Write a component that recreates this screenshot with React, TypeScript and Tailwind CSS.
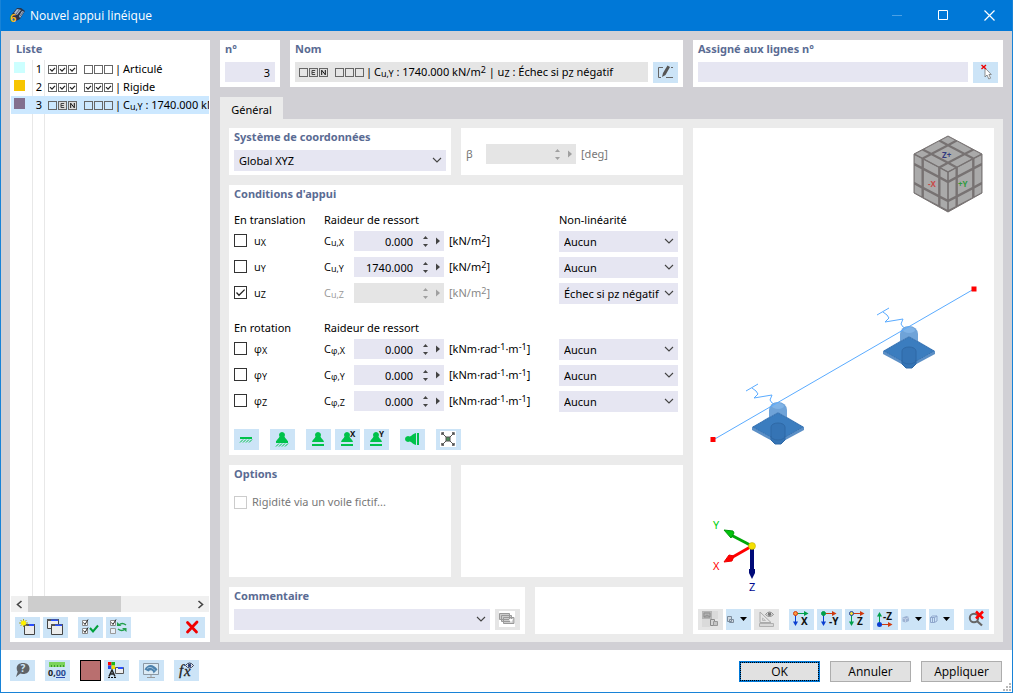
import { useState } from 'react'
import type { ReactNode } from 'react'
import clsx from 'clsx'

type Mark = '' | 'v' | 'E' | 'N'

const supports: { id: number; color: string; marks: Mark[]; name: ReactNode }[] = [
  { id: 1, color: 'bg-[#ccffff]', marks: ['v', 'v', 'v', '', '', ''], name: 'Articulé' },
  { id: 2, color: 'bg-[#f7c500]', marks: ['v', 'v', 'v', 'v', 'v', 'v'], name: 'Rigide' },
  { id: 3, color: 'bg-[#83708f]', marks: ['', 'E', 'N', '', '', ''], name: <>C<Sub>u,Y</Sub> : 1740.000 kN</> },
]

function Sub({ children }: { children: ReactNode }) {
  return <sub className="text-[9px] bottom-[-1px]">{children}</sub>
}

function Sup({ children }: { children: ReactNode }) {
  return <sup className="text-[9px] top-[-3px]">{children}</sup>
}

function Panel({ title, className, children }: { title?: string; className?: string; children?: ReactNode }) {
  return (
    <section className={clsx('bg-white', className)}>
      {title && <h2 className="px-[5px] h-5 leading-[17px] font-bold text-[#5a6b93]">{title}</h2>}
      {children}
    </section>
  )
}

function Marks({ marks }: { marks: Mark[] }) {
  return (
    <span className="flex gap-[7px] shrink-0">
      {[marks.slice(0, 3), marks.slice(3)].map((group, g) => (
        <span key={g} className="flex gap-px">
          {group.map((m, i) => (
            <svg key={i} width="9" height="9" viewBox="0 0 9 9" fill="none" stroke="#666">
              <rect x=".5" y=".5" width="8" height="8" fill={m === 'E' || m === 'N' ? '#ddd' : 'none'} />
              {m === 'v' && <path d="M2 4.2l2 2 3-3.4" stroke="#222" strokeWidth="1.2" />}
              {m === 'E' && <path d="M6.2 2.5H3v4h3.2M3 4.5h2.8" stroke="#444" />}
              {m === 'N' && <path d="M2.7 7V2.2l3.6 4.6V2" stroke="#111" />}
            </svg>
          ))}
        </span>
      ))}
    </span>
  )
}

function IconButton({ label, off, children }: { label: string; off?: boolean; children: ReactNode }) {
  return (
    <button type="button" aria-label={label} disabled={off} className={clsx('w-[25px] h-[21px] shrink-0', off ? 'bg-[#e5e5e5]' : 'bg-[#cce4f7] hover:bg-[#b8daf4]')}>
      <svg width="25" height="21" viewBox="0 0 25 21" fill="none">{children}</svg>
    </button>
  )
}

function Select({ label, options, className }: { label: string; options: string[]; className?: string }) {
  return (
    <div className={clsx('relative h-[21px] bg-[#e6e6f2]', className)}>
      <select aria-label={label} className="w-full h-full pl-[5px] pr-4 appearance-none outline-none">
        {options.map((o) => <option key={o}>{o}</option>)}
      </select>
      <svg className="absolute right-1 top-[7px] pointer-events-none" width="10" height="7" viewBox="0 0 10 7" fill="none" stroke="#444" strokeWidth="1.1">
        <path d="M1 1l4 4 4-4" />
      </svg>
    </div>
  )
}

function Stepper({ label, value, off }: { label: string; value?: string; off?: boolean }) {
  return (
    <div className={clsx('flex items-center w-[90px] h-5', off ? 'bg-[#e5e5e5] text-[#a0a0a0]' : 'bg-[#e6e6f2] text-[#444]')}>
      <input type="text" aria-label={label} defaultValue={value} disabled={off} className="flex-1 min-w-0 h-full pt-px text-right text-black outline-none" />
      <span className="flex flex-col gap-[5px] pl-[10px] pr-2">
        <button type="button" aria-label={`${label} +`} disabled={off} className="h-[3px]">
          <svg className="block" width="5" height="3" viewBox="0 0 5 3" fill="currentColor"><path d="M2.500 0L5 3H0z" /></svg>
        </button>
        <button type="button" aria-label={`${label} -`} disabled={off} className="h-[3px]">
          <svg className="block" width="5" height="3" viewBox="0 0 5 3" fill="currentColor"><path d="M2.500 3L5 0H0z" /></svg>
        </button>
      </span>
      <button type="button" aria-label={`${label} menu`} disabled={off} className="pr-1">
        <svg className="block" width="4" height="8" viewBox="0 0 4 8" fill="currentColor"><path d="M0 .5L4 4 0 7.500z" /></svg>
      </button>
    </div>
  )
}

function Check({ id, checked, off, onChange }: { id: string; checked?: boolean; off?: boolean; onChange?: () => void }) {
  return (
    <span className="relative size-[13px] shrink-0">
      <input id={id} type="checkbox" checked={!!checked} disabled={off} onChange={() => onChange?.()} className="block size-[13px] appearance-none border border-[#333] bg-white disabled:border-[#ccc]" />
      {checked && (
        <svg className="absolute inset-0 pointer-events-none" width="13" height="13" viewBox="0 0 13 13" fill="none" stroke="#222" strokeWidth="1.3">
          <path d="M2.500 6.500L5 9.200l5.600-5.600" />
        </svg>
      )}
    </span>
  )
}

const perM2 = <>[kN/m<Sup>2</Sup>]</>
const perRad = <>[kNm·rad<Sup>-1</Sup>·m<Sup>-1</Sup>]</>

const blocks = [
  {
    title: 'En translation', third: 'Non-linéarité', sym: 'u', unit: perM2,
    rows: [
      { axis: 'X', value: '0.000', options: ['Aucun', 'Échec si px négatif'] },
      { axis: 'Y', value: '1740.000', options: ['Aucun', 'Échec si py négatif'] },
      { axis: 'Z', value: '', options: ['Échec si pz négatif', 'Aucun'] },
    ],
  },
  {
    title: 'En rotation', third: '', sym: 'φ', unit: perRad,
    rows: [
      { axis: 'X', value: '0.000', options: ['Aucun'] },
      { axis: 'Y', value: '0.000', options: ['Aucun'] },
      { axis: 'Z', value: '0.000', options: ['Aucun'] },
    ],
  },
]

function Conditions() {
  const [fixed, setFixed] = useState<Record<string, boolean>>({ uZ: true })

  return (
    <div className="flex flex-col gap-[14px] px-[5px] pt-[5px]">
      {blocks.map((b) => (
        <div key={b.title}>
          <div className="grid grid-cols-[90px_1fr_119px] h-[21px] leading-[19px]">
            <span>{b.title}</span>
            <span>Raideur de ressort</span>
            <span>{b.third}</span>
          </div>
          <div className="flex flex-col gap-[5px]">
            {b.rows.map((r) => {
              const key = b.sym + r.axis
              const on = fixed[key]
              return (
                <div key={key} className="grid grid-cols-[90px_30px_90px_1fr_119px] items-start h-[21px] leading-5">
                  <span className="flex items-center gap-[7px] h-[19px]">
                    <Check id={key} checked={on} onChange={() => setFixed({ ...fixed, [key]: !on })} />
                    <label htmlFor={key} className="font-['Open_Sans',sans-serif]">{b.sym}<Sub>{r.axis}</Sub></label>
                  </span>
                  <span className={clsx("font-['Open_Sans',sans-serif]", on && 'text-[#999]')}>C<Sub>{b.sym},{r.axis}</Sub></span>
                  <Stepper label={`C ${key}`} value={r.value} off={on} />
                  <span className={clsx('pl-[5px]', on && 'text-[#888]')}>{b.unit}</span>
                  <Select label={`Non-linéarité ${key}`} options={r.options} />
                </div>
              )
            })}
          </div>
        </div>
      ))}
    </div>
  )
}

const Cone = () => <path d="M12 3a3 3 0 0 1 2.500 4.600c.3 2 3 2.800 3.500 5.400H6c.5-2.600 3.200-3.400 3.500-5.400A3 3 0 0 1 12 3z" fill="#00c24a" />

function Presets() {
  return (
    <div className="flex px-[5px] pb-[5px] mt-auto">
      <div className="flex gap-[11px] pr-[11px]">
        <IconButton label="Encastrement">
          <path d="M6 8h12v2H6z" fill="#00c24a" />
          <path d="M6 13.500l3-3m0 3l3-3m0 3l3-3m0 3l3-3" stroke="#00c24a" />
        </IconButton>
        <IconButton label="Articulation">
          <Cone />
          <path d="M6 12h12v2H6z" fill="#00c24a" />
          <path d="M6 17.500l3-3m0 3l3-3m0 3l3-3m0 3l3-3" stroke="#00c24a" />
        </IconButton>
      </div>
      <div className="flex gap-1 pr-[11px]">
        {['', 'X', 'Y'].map((a) => (
          <IconButton key={a} label={`Glissement ${a}`}>
            <Cone />
            <path d="M6 15h12v2H6z" fill="#00c24a" />
            <text x="15" y="8" fontSize="8" fontWeight="bold" fill="#111">{a}</text>
          </IconButton>
        ))}
      </div>
      <div className="flex gap-[11px]">
        <IconButton label="Appui latéral">
          <path d="M5 10a3 3 0 0 1 4.600-2.500C11.600 7.200 13 4.500 16 4v12c-3-.5-4.400-3.200-6.400-3.500A3 3 0 0 1 5 10z" fill="#00c24a" />
          <path d="M17 4h2v12h-2z" fill="#00c24a" />
        </IconButton>
        <IconButton label="Libre">
          <rect x="4" y="2" width="16" height="16" fill="#fff" />
          <path d="M6.500 4.500l11 11m0-11l-11 11" stroke="#555" />
          <path d="M6 6V4h2m8 0h2v2m0 8v2h-2m-8 0H6v-2" stroke="#444" strokeWidth="1.400" />
          <rect x="10" y="8" width="4" height="4" fill="#4c8a58" stroke="#555" />
        </IconButton>
      </div>
    </div>
  )
}

/* ---------- 3D view ---------- */

// isometric cube: corner at the front, faces cut into 3x3 tiles
const faces = [
  { o: [255, 8], u: [34, 18], v: [-34, 18] },
  { o: [221, 26], u: [34, 18], v: [0, 39] },
  { o: [255, 44], u: [34, -18], v: [0, 39] },
]
const cuts = [[0.02, 0.22], [0.29, 0.71], [0.78, 0.98]]

function Cube() {
  return (
    <g>
      <path d="M255 8l34 18v39l-34 19-34-19V26z" fill="#777272" stroke="#777272" />
      {faces.map(({ o, u, v }, f) =>
        cuts.map(([a0, a1], i) =>
          cuts.map(([b0, b1], j) => (
            <polygon
              key={`${f}${i}${j}`}
              fill="#aaa"
              points={[[a0, b0], [a1, b0], [a1, b1], [a0, b1]].map(([a, b]) => `${o[0] + u[0] * a + v[0] * b},${o[1] + u[1] * a + v[1] * b}`).join(' ')}
            />
          ))
        )
      )}
      <path d="M221 26l34 18 34-18M255 44v40" stroke="#777272" fill="none" />
      <text x="235" y="59" fontSize="8" fontWeight="bold" fill="#c94a4a">-X</text>
      <text x="265" y="59" fontSize="8" fontWeight="bold" fill="#2f9a3c">+Y</text>
      <text x="249" y="30" fontSize="8" fontWeight="bold" fill="#333a80">Z+</text>
    </g>
  )
}

function Support({ x, y }: { x: number; y: number }) {
  return (
    <g transform={`translate(${x} ${y})`}>
      <path d="M-32-12l12-7m-6 4l4 3 2 3-4 4 18-3-2 5 2 3 5 2" stroke="#5aabff" fill="none" />
      <path d="M-9 7a9 8 0 0 1 18 0v12h-18z" fill="#6fa3d8" />
      <path d="M-26 27v-3L-9 14l9-5 9 5 17 10v3L0 41z" fill="#5b8fc6" />
      <path d="M-25 24L-9 15l9-5 9 5 16 9L0 38z" fill="#3b7dbf" stroke="#346ead" strokeDasharray="1 1" />
      <path d="M-7 24a7 4 0 0 1 14 0v13l-4 4h-6l-4-4z" fill="#3574b5" stroke="#2f69a6" />
      <path d="M-7 33a7 4 0 0 0 14 0" stroke="#2f69a6" fill="none" />
      <ellipse cx="0" cy="3" rx="6" ry="3" fill="#80b3e6" />
    </g>
  )
}

function Scene() {
  return (
    <svg className="block w-full flex-1 min-h-0" viewBox="0 0 301 481" fill="none">
      <Cube />
      <Support x={216} y={199} />
      <Support x={85} y={275} />
      <path d="M20 312L281 161" stroke="#5aabff" />
      <path d="M17.500 309h5v5h-5zM278.500 158.500h5v5h-5z" fill="#f00" />
      <path d="M59 418L38 407" stroke="#00a808" strokeWidth="3" />
      <path d="M31 402l9 1 1 2-3 5z" fill="#00c40a" stroke="#00970a" />
      <path d="M59 418L38 430" stroke="#f00" strokeWidth="3" />
      <path d="M31 434l5-7 5 1-2 5z" fill="#f00" stroke="#e00" />
      <path d="M59 418v24" stroke="#000a78" strokeWidth="4" />
      <path d="M56 441h6v4l-3 6-3-6z" fill="#000a78" />
      <circle cx="59" cy="418" r="3.500" fill="#f5e000" stroke="#b9a800" strokeWidth=".5" />
      <text x="20" y="401" fontSize="11" fill="#00d010">Y</text>
      <text x="20" y="442" fontSize="11" fill="#f00">X</text>
      <text x="56" y="463" fontSize="11" fill="#000a90">Z</text>
    </svg>
  )
}

const axisViews = [
  { name: 'X', dot: '#ff9a3c', ring: '#d03a10', h: '#00a04a', v: '#0a3fd0' },
  { name: '-Y', dot: '#00a04a', ring: '#00a04a', h: '#d03a10', v: '#0a3fd0' },
  { name: 'Z', dot: '#f5e23c', ring: '#1a3a9c', h: '#d03a10', v: '#00a04a' },
]

function ViewToolbar() {
  return (
    <div className="flex flex-wrap gap-[10px] px-[5px] pb-1">
      <div className="flex gap-[3px]">
        <IconButton label="Image" off>
          <path d="M4 2h10v8H4z" fill="#b5b5b5" /><path d="M6 4h6v4H6zM6 8l3-2 3 2" stroke="#8f8f8f" />
          <path d="M14 2h6v8h-6zM4 10h8v8H4z" fill="#dadada" />
          <path d="M12.500 10.500h4v6h-4z" fill="#d5d5d5" stroke="#8a8a8a" /><path d="M15.500 12.500h4v4h-4z" fill="#c5c5c5" stroke="#999" />
        </IconButton>
        <IconButton label="Rendu">
          <path d="M1.500 7.500h4v5h-4zM3.500 10.500h4v3h-4z" fill="#d0d8e0" stroke="#7c8c9c" />
          <path d="M14 8h7l-3.500 4z" fill="#000" />
        </IconButton>
        <IconButton label="Mesures" off>
          <path d="M6 3v10.500h11z" stroke="#aaa" /><path d="M8.500 9v2.500h3z" stroke="#bbb" />
          <path d="M5.500 14.500h14v3h-14z" fill="#d8d8d8" stroke="#b0b0b0" />
          <path d="M11.500 5.500q4-5 8 0-4 4-8 0z" fill="#eee" stroke="#888" /><circle cx="15.500" cy="5.200" r="1.800" fill="#777" />
        </IconButton>
      </div>
      <div className="flex gap-[3px]">
        {axisViews.map((a) => (
          <IconButton key={a.name} label={`Vue ${a.name}`}>
            <path d="M6.500 4.500H17" stroke={a.h} /><path d="M15 2l4.500 2.500L15 7z" fill={a.h} />
            <path d="M6.500 5v9" stroke={a.v} /><path d="M4 12.500h5l-2.500 4.500z" fill={a.v} />
            <circle cx="6.500" cy="4.500" r="2" fill={a.dot} stroke={a.ring} />
            <text x="12" y="16" fontSize="10" fontWeight="bold" fill="#111">{a.name}</text>
          </IconButton>
        ))}
        <IconButton label="Vue -Z">
          <path d="M6.500 15.500H17" stroke="#d03a10" /><path d="M15 13l4.500 2.500L15 18z" fill="#d03a10" />
          <path d="M6.500 15V6" stroke="#00a04a" /><path d="M4 7.500h5L6.500 3z" fill="#00a04a" />
          <circle cx="6.500" cy="15.500" r="2.500" fill="#0a3fd0" />
          <text x="10" y="11" fontSize="10" fontWeight="bold" fill="#111">-Z</text>
        </IconButton>
        <IconButton label="Vue isométrique">
          <path d="M1.500 8.500l4-1.500 2.500 1v4l-3.500 1.500-3-1z" fill="#9cb2d2" /><path d="M1.500 9l3 1L8 8.500M4.500 10v3.500" stroke="#c3d2e8" />
          <path d="M14 8h7l-3.500 4z" fill="#000" />
        </IconButton>
        <IconButton label="Plans">
          <path d="M1.500 8.500h4v5h-4zM1.500 8.500l2-1.500H8v5l-2.500 1.500M5.500 8.500L8 7M3.500 8.500v5" stroke="#8fa6cc" />
          <path d="M14 8h7l-3.500 4z" fill="#000" />
        </IconButton>
      </div>
      <IconButton label="Réinitialiser le zoom">
        <circle cx="10" cy="9" r="4.200" stroke="#666" strokeWidth="2" />
        <path d="M13 12l5 4.500" stroke="#666" strokeWidth="2.200" />
        <path d="M12 2.500l7 7m0-7l-7 7" stroke="#f00" strokeWidth="2.500" />
      </IconButton>
    </div>
  )
}

/* ---------- left list ---------- */

function SupportList() {
  const [selected, setSelected] = useState(3)

  return (
    <Panel title="Liste" className="flex flex-col w-[200px] shrink-0 px-px">
      <div className="relative flex-1 overflow-hidden">
        <div className="absolute inset-y-0 left-[21px] w-[13px] border-x border-[#e8e8e8]" />
        {supports.map((s) => (
          <button
            key={s.id}
            type="button"
            onClick={() => setSelected(s.id)}
            className={clsx('relative flex items-center w-full h-[18px] text-left whitespace-nowrap overflow-hidden', selected === s.id && 'bg-[#cce8ff]')}
          >
            <span className={clsx('size-[11px] ml-[3px] mb-1 shrink-0', s.color)} />
            <span className="w-[17px] mr-[6px] text-right shrink-0">{s.id}</span>
            <Marks marks={s.marks} />
            <span className="flex gap-[2px] pl-[2px]"><span>|</span><span>{s.name}</span></span>
          </button>
        ))}
      </div>
      <div className="flex items-center h-4 bg-[#f0f0f0]">
        <button type="button" aria-label="Défiler à gauche" className="w-[17px]">
          <svg className="block mx-auto" width="7" height="9" viewBox="0 0 7 9" fill="none" stroke="#444" strokeWidth="1.600"><path d="M5.500 1l-4 3.500 4 3.500" /></svg>
        </button>
        <div className="flex-1 h-full"><div className="w-[57%] h-full bg-[#cdcdcd]" /></div>
        <button type="button" aria-label="Défiler à droite" className="w-[17px]">
          <svg className="block mx-auto" width="7" height="9" viewBox="0 0 7 9" fill="none" stroke="#444" strokeWidth="1.600"><path d="M1.500 1l4 3.500-4 3.500" /></svg>
        </button>
      </div>
      <div className="flex gap-[3px] px-1 pt-[5px] pb-1">
        <IconButton label="Nouveau">
          <path d="M9.500 7.500h10v10h-10z" fill="#ececec" stroke="#444" /><path d="M9 7h11v2H9z" fill="#555" /><path d="M14 7h5v2h-5z" fill="#2a50ff" />
          <path d="M8.500 2v8M4 6h9M5.500 3l6 6m0-6l-6 6" stroke="#a8a030" /><circle cx="8.500" cy="6" r="2.500" fill="#fff200" />
        </IconButton>
        <IconButton label="Copier">
          <path d="M4.500 2.500h11v9h-11z" fill="#ececec" stroke="#444" /><path d="M4 2h12v2H4z" fill="#555" /><path d="M8 2.500h7V4H8z" fill="#2a50ff" />
          <path d="M8.500 7.500h11v10h-11z" fill="#ececec" stroke="#444" /><path d="M8 7h12v2H8z" fill="#555" /><path d="M12 7.500h7V9h-7z" fill="#2a50ff" />
        </IconButton>
        <div className="flex gap-[3px] pl-[7px] flex-1">
          <IconButton label="Tout sélectionner">
            <path d="M4.500 3.500h5v5h-5zM4.500 11.500h5v5h-5z" fill="#fff" stroke="#888" />
            <path d="M5.500 5.500l1.500 2 3-5M5.500 13.500l1.500 2 3-5" stroke="#222" />
            <path d="M12 11l3 3.500 5-6" stroke="#00a03c" strokeWidth="2" />
          </IconButton>
          <IconButton label="Inverser la sélection">
            <path d="M4.500 3.500h5v5h-5z" fill="#fff" stroke="#888" /><path d="M4.500 11.500h5v5h-5z" fill="#e8f0f8" stroke="#999" />
            <path d="M5.500 5.500l1.500 2 3-5" stroke="#222" />
            <path d="M13 8q3-3 7 0M19 12q-3 3-7 0" stroke="#22a04c" strokeWidth="1.500" />
            <path d="M11 5v4h4.500zM20.500 15v-4H16z" fill="#22a04c" />
          </IconButton>
        </div>
        <IconButton label="Supprimer">
          <path d="M7.500 5.500l9 9.500m.5-10l-9.500 10" stroke="#f00000" strokeWidth="2.800" strokeLinecap="round" />
        </IconButton>
      </div>
    </Panel>
  )
}

function TitleBar() {
  return (
    <header className="flex items-center h-[31px] pl-2 bg-[#0078d7] text-white font-['Open_Sans',sans-serif] text-xs">
      <svg width="17" height="17" viewBox="0 0 17 17" fill="none">
        <path d="M3 7l5-6 4 0 4 3-5 8-4 2-4-3z" fill="#26354d" />
        <path d="M5 6l3-4 4 1-4 5zM10 9l3-5 2 1-4 6z" fill="#aabbd0" /><path d="M7 7l4-5M11 9l4-5" stroke="#53627a" />
        <text x="1" y="15" fontSize="11" fontWeight="bold" fill="#f5b921">6</text>
      </svg>
      <h1 className="flex-1 pl-1">Nouvel appui linéique</h1>
      <button type="button" aria-label="Réduire" disabled className="w-[46px] flex justify-center">
        <svg width="11" height="11" viewBox="0 0 11 11"><path d="M0 5.500h10" stroke="#4ba0e4" /></svg>
      </button>
      <button type="button" aria-label="Agrandir" className="w-[46px] flex justify-center">
        <svg width="11" height="11" viewBox="0 0 11 11" fill="none" stroke="#fff"><path d="M.5 .5h9v9h-9z" /></svg>
      </button>
      <button type="button" aria-label="Fermer" className="w-[46px] flex justify-center">
        <svg width="11" height="11" viewBox="0 0 11 11" stroke="#fff" strokeWidth="1.200"><path d="M.5 .5l10 10m0-10l-10 10" /></svg>
      </button>
    </header>
  )
}

function Footer() {
  const btn = "w-[81px] h-[21px] font-['Open_Sans',sans-serif] text-xs"
  return (
    <footer className="relative flex items-start gap-[10px] h-[42px] pt-[10px] pl-[9px] pr-[10px] bg-white">
      <IconButton label="Aide">
        <path d="M13 3c4 0 6.500 2.200 6.500 5.500S17 14 13 14c-1 0-2-.1-2.800-.4L6 17l1.700-5.200C7 10.800 6.700 9.800 6.700 8.500 6.700 5.200 9 3 13 3z" fill="#5f6368" />
        <text x="10.500" y="12" fontSize="10" fontWeight="bold" fill="#cce4f7">?</text>
      </IconButton>
      <IconButton label="Décimales">
        <path d="M4 2h16v5H4z" fill="#7bd35c" /><path d="M6.500 5v2m3-2v2m3-2v2m3-2v2m3-2v2" stroke="#3c9a2a" />
        <text x="3" y="16" fontSize="9" fontWeight="bold" fill="#222">0,<tspan fill="#2b4b90">00</tspan></text>
        <path d="M11 17.500h9" stroke="#2b4bb0" />
      </IconButton>
      <div className="flex gap-[3px]">
        <button type="button" aria-label="Couleur" className="size-[21px] border border-black bg-[#b96f6f]" />
        <IconButton label="Affichage">
          <path d="M4 2h3.500v3.500H4z" fill="#f00" /><path d="M7.500 2H11v3.500H7.500z" fill="#1db81d" />
          <path d="M4 5.500h3.500V9H4z" fill="#2447e8" /><path d="M7.500 5.500H11V9H7.500z" fill="#f6e000" />
          <path d="M11.500 7.500h8v6h-8z" fill="#eee" stroke="#555" /><path d="M14 7h5v2h-5z" fill="#2a50ff" />
          <path d="M5 16.500l3-6.500 3 6.500M6.500 14h3.500" stroke="#222" strokeWidth="1.500" />
          <path d="M4 17.500h9" stroke="#111" strokeDasharray="2 1" />
        </IconButton>
      </div>
      <IconButton label="Écran">
        <path d="M4.500 3.500h15v11h-15z" fill="#dcebf5" stroke="#8b98a4" />
        <path d="M5.500 9.500c3-6 9-6 13 0l-4 4c0-3-3-4.500-5-2z" fill="#4d82ad" /><path d="M8 8.500q4-3 8 2" stroke="#9cc0dc" />
        <path d="M12 14v3m-4 .5h8" stroke="#999" />
      </IconButton>
      <IconButton label="Formule">
        <text x="5" y="15" fontSize="15" fontStyle="italic" fontFamily="Liberation Serif, serif" stroke="#222" strokeWidth=".3" fill="#222">f</text>
        <text x="10" y="16" fontSize="15" fontStyle="italic" fontFamily="Liberation Serif, serif" stroke="#222" strokeWidth=".3" fill="#222">x</text>
        <path d="M11.500 5.500q4-5 8 0-4 5-8 0z" fill="#fff" stroke="#2a3550" /><circle cx="15.500" cy="5.500" r="1.800" fill="#2a4078" />
      </IconButton>
      <div className="flex flex-1 justify-end gap-[10px] pt-px">
        <button type="button" className={clsx(btn, 'p-px bg-[#0078d7]')}>
          <span className="block h-[19px] p-px border border-dotted border-black">
            <span className="block h-[15px] leading-[15px] bg-[#e1e1e1] outline outline-[#e1e1e1]">OK</span>
          </span>
        </button>
        <button type="button" className={clsx(btn, 'border border-[#adadad] bg-[#e1e1e1]')}>Annuler</button>
        <button type="button" className={clsx(btn, 'border border-[#adadad] bg-[#e1e1e1]')}>Appliquer</button>
      </div>
      <svg className="absolute right-0 bottom-0" width="10" height="10" viewBox="0 0 10 10" fill="#b8b8b8">
        <path d="M7 1h2v2H7zM7 4h2v2H7zM7 7h2v2H7zM4 4h2v2H4zM4 7h2v2H4zM1 7h2v2H1z" />
      </svg>
    </footer>
  )
}

export default function App() {
  return (
    <div className="flex flex-col min-h-screen border border-[#1883d7] border-t-0 bg-[#d1d0d5] font-['Noto_Sans','Open_Sans',sans-serif] text-[11px] leading-4 text-black">
      <TitleBar />
      <main className="flex flex-1 gap-[10px] px-[9px] pt-[9px] pb-2">
        <SupportList />
        <div className="flex flex-col flex-1 min-w-0">
          <div className="flex gap-[10px]">
            <Panel title="n°" className="w-[60px]">
              <div className="px-[5px] pt-[2px] pb-[5px]">
                <input type="text" aria-label="n°" defaultValue="3" className="block w-full h-5 px-[5px] bg-[#e6e6f2] text-right outline-none" />
              </div>
            </Panel>
            <Panel title="Nom" className="w-[393px]">
              <div className="flex gap-[5px] px-[5px] pt-[2px]">
                <div role="textbox" aria-label="Nom" aria-readonly="true" className="flex flex-1 items-center h-5 px-1 bg-[#e5e5e5]">
                  <Marks marks={supports[2].marks} />
                  <span className="flex gap-[2px] pl-[2px]">
                    <span>|</span>
                    <span>C<Sub>u,Y</Sub> : 1740.000 kN/m<Sup>2</Sup> | u<Sub>Z</Sub> : Échec si p<Sub>Z</Sub> négatif</span>
                  </span>
                </div>
                <IconButton label="Modifier le nom">
                  <path d="M10 5.500H5.500v10H8M13 15.500h7M18 5.500h2" stroke="#666" />
                  <path d="M9 15l1-4 4.500-7.500 2.500 1.500-4.500 8z" fill="#555" />
                </IconButton>
              </div>
            </Panel>
            <Panel title="Assigné aux lignes n°" className="flex-1">
              <div className="flex gap-[5px] px-[5px] pt-[2px]">
                <input type="text" aria-label="Assigné aux lignes n°" className="flex-1 min-w-0 h-5 px-[5px] bg-[#e6e6f2] outline-none" />
                <IconButton label="Sélectionner">
                  <path d="M12 6v9l2-2 1.800 4 1.800-.8-1.700-3.700h2.400z" fill="#fff" stroke="#777" strokeWidth=".8" />
                  <path d="M8.500 3l4.500 4m0-4L8.500 7" stroke="#e00" strokeWidth="1.400" />
                </IconButton>
              </div>
            </Panel>
          </div>

          <div role="tablist" className="pt-[10px] h-8">
            <button type="button" role="tab" aria-selected="true" className="block w-[63px] h-[22px] pt-1 bg-[#ebebeb]">Général</button>
          </div>

          <div className="flex flex-1 gap-[10px] px-[9px] pt-[9px] pb-2 bg-[#ebebeb]">
            <div className="flex flex-col gap-[10px] w-[454px] shrink-0">
              <div className="grid grid-cols-2 gap-[10px] h-[47px]">
                <Panel title="Système de coordonnées">
                  <div className="px-[5px] pt-[2px]"><Select label="Système de coordonnées" options={['Global XYZ']} /></div>
                </Panel>
                <Panel className="flex items-center gap-[5px] px-[5px] pb-[3px] pt-2 text-[#777]">
                  <span className="w-[15px]">β</span>
                  <Stepper label="β" off />
                  <span>[deg]</span>
                </Panel>
              </div>
              <Panel title="Conditions d'appui" className="flex flex-col flex-[270]">
                <Conditions />
                <Presets />
              </Panel>
              <div className="grid grid-cols-2 gap-[10px] flex-[112]">
                <Panel title="Options">
                  <div className="flex items-center gap-[5px] px-[5px] pt-[9px] text-[#777]">
                    <Check id="voile" off />
                    <label htmlFor="voile">Rigidité via un voile fictif...</label>
                  </div>
                </Panel>
                <Panel />
              </div>
              <div className="flex gap-[10px] h-[47px]">
                <Panel title="Commentaire" className="w-[296px]">
                  <div className="flex gap-[5px] px-[5px] pt-[2px]">
                    <Select label="Commentaire" options={['']} className="flex-1" />
                    <IconButton label="Commentaires prédéfinis" off>
                      <path d="M4 2h16v16H4z" fill="#fff" />
                      <path d="M4.500 4.500h10v6h-10zM6.500 6.500h10v6h-10zM8.500 8.500h10.500v6H8.500z" fill="#ccc" stroke="#999" />
                      <path d="M14 10h4l-2 4z" fill="#fff" />
                    </IconButton>
                  </div>
                </Panel>
                <Panel className="flex-1" />
              </div>
            </div>
            <Panel className="flex flex-col flex-1 min-w-0">
              <Scene />
              <ViewToolbar />
            </Panel>
          </div>
        </div>
      </main>
      <Footer />
    </div>
  )
}
